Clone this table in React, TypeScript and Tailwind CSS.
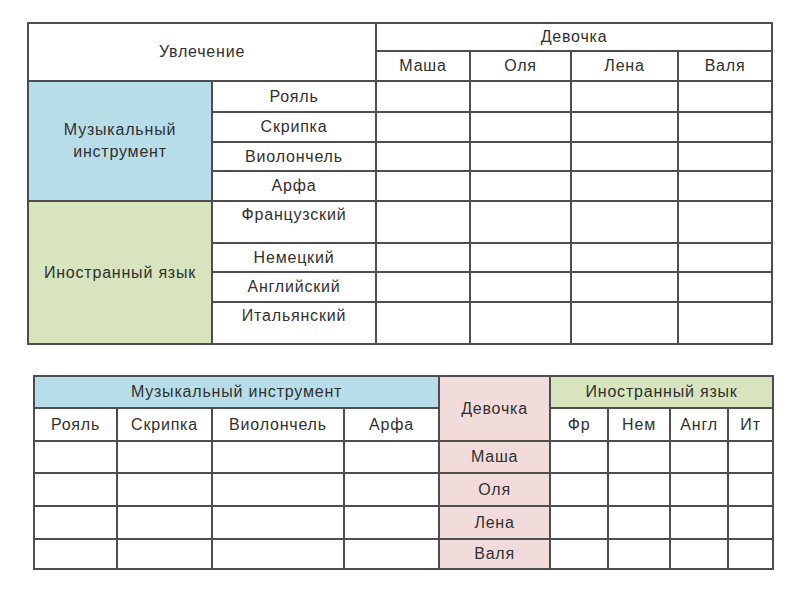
import React from "react";

const B = "border-2 border-[#4d4d4d]";

function Td({
  children,
  className = "",
  rowSpan,
  colSpan,
}: {
  children?: React.ReactNode;
  className?: string;
  rowSpan?: number;
  colSpan?: number;
}) {
  return (
    <td
      rowSpan={rowSpan}
      colSpan={colSpan}
      className={`${B} p-0 text-center align-middle ${className}`}
    >
      {children}
    </td>
  );
}

export default function App() {
  const girls = ["Маша", "Оля", "Лена", "Валя"];
  const music = ["Рояль", "Скрипка", "Виолончель", "Арфа"];
  const langs = [
    { n: "Французский", h: "h-[42px]", top: true },
    { n: "Немецкий", h: "h-[29px]", top: false },
    { n: "Английский", h: "h-[30px]", top: false },
    { n: "Итальянский", h: "h-[42px]", top: true },
  ];
  const musicH = ["h-[31px]", "h-[30px]", "h-[29px]", "h-[30px]"];
  const girlH = ["h-[32px]", "h-[33px]", "h-[33px]", "h-[30px]"];

  return (
    <div
      className="w-[800px] h-[600px] bg-white text-[#303030] text-[16px] leading-none tracking-[0.8px]"
      style={{ fontFamily: '"Liberation Sans", Arial, sans-serif' }}
    >
      <div className="pt-[22px] pl-[27px]">
        <table className="table-fixed border-collapse w-[744px]">
          <colgroup>
            <col className="w-[184px]" />
            <col className="w-[164px]" />
            <col className="w-[94px]" />
            <col className="w-[101px]" />
            <col className="w-[107px]" />
            <col className="w-[94px]" />
          </colgroup>
          <tbody>
            <tr className="h-[28px]">
              <Td colSpan={2} rowSpan={2}>
                Увлечение
              </Td>
              <Td colSpan={4}>Девочка</Td>
            </tr>
            <tr className="h-[30px]">
              {girls.map((g) => (
                <Td key={g}>{g}</Td>
              ))}
            </tr>
            {music.map((m, i) => (
              <tr key={m} className={musicH[i]}>
                {i === 0 && (
                  <Td rowSpan={4} className="bg-[#b7dde8] leading-[22px]">
                    Музыкальный
                    <br />
                    инструмент
                  </Td>
                )}
                <Td>{m}</Td>
                <Td />
                <Td />
                <Td />
                <Td />
              </tr>
            ))}
            {langs.map((l, i) => (
              <tr key={l.n} className={l.h}>
                {i === 0 && (
                  <Td rowSpan={4} className="bg-[#d7e4bd]">
                    Иностранный язык
                  </Td>
                )}
                <Td className={l.top ? "!align-top pt-[5px]" : ""}>{l.n}</Td>
                <Td />
                <Td />
                <Td />
                <Td />
              </tr>
            ))}
          </tbody>
        </table>
      </div>

      <div className="pt-[30px] pl-[33px]">
        <table className="table-fixed border-collapse w-[739px]">
          <colgroup>
            <col className="w-[83px]" />
            <col className="w-[95px]" />
            <col className="w-[132px]" />
            <col className="w-[95px]" />
            <col className="w-[111px]" />
            <col className="w-[58px]" />
            <col className="w-[62px]" />
            <col className="w-[58px]" />
            <col className="w-[45px]" />
          </colgroup>
          <tbody>
            <tr className="h-[32px]">
              <Td colSpan={4} className="bg-[#b7dde8]">
                Музыкальный инструмент
              </Td>
              <Td rowSpan={2} className="bg-[#f2dcdb]">
                Девочка
              </Td>
              <Td colSpan={4} className="bg-[#d7e4bd]">
                Иностранный язык
              </Td>
            </tr>
            <tr className="h-[33px]">
              {music.map((m) => (
                <Td key={m}>{m}</Td>
              ))}
              <Td>Фр</Td>
              <Td>Нем</Td>
              <Td>Англ</Td>
              <Td>Ит</Td>
            </tr>
            {girls.map((g, i) => (
              <tr key={g} className={girlH[i]}>
                <Td />
                <Td />
                <Td />
                <Td />
                <Td className="bg-[#f2dcdb]">{g}</Td>
                <Td />
                <Td />
                <Td />
                <Td />
              </tr>
            ))}
          </tbody>
        </table>
      </div>
    </div>
  );
}
